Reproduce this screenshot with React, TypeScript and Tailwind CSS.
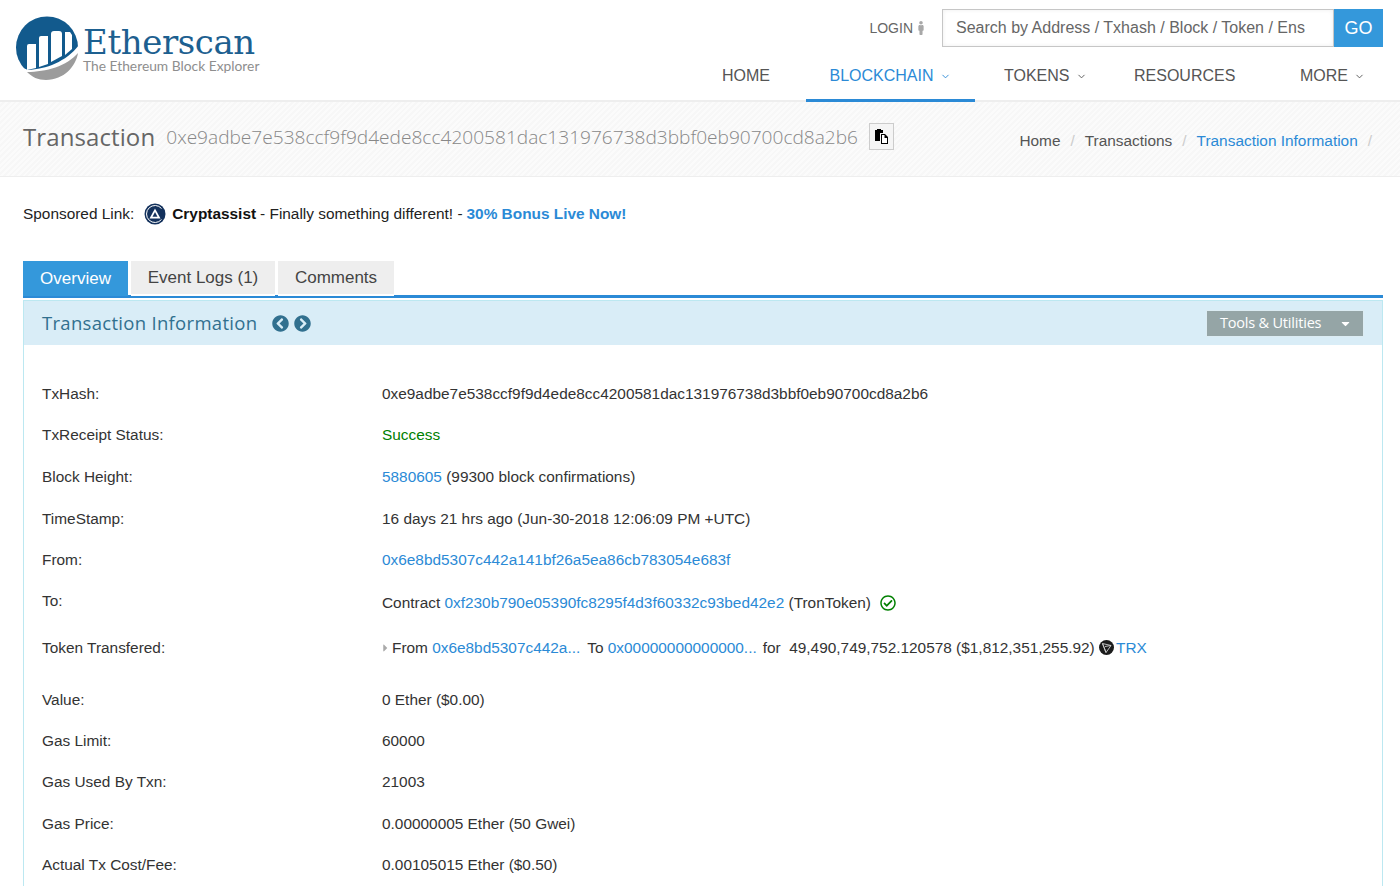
import React from "react";
import { FaChevronCircleLeft, FaChevronCircleRight, FaMale, FaRegCheckCircle, FaCaretDown, FaCaretRight } from "react-icons/fa";
import { ChevronDown } from "lucide-react";

const A = ({ children }: { children: React.ReactNode }) => <a className="text-[#2b8ad6]">{children}</a>;

function Logo() {
  return (
    <div className="flex items-start pl-[16px] pt-[16px]">
      <svg width="63" height="65" viewBox="0 0 63 65" className="shrink-0">
        <circle cx="31" cy="31.5" r="31" fill="#125a8d" />
        <path d="M0 49 L12 54 C30 53 50 46 63 29 L63 65 L0 65Z" fill="#ffffff" />
        <path d="M11 56 C 30 56 51 50 62 37 C60 50 48 64 30 64 C22 64 16 61 11 56Z" fill="#9c9c9c" />
        <path d="M11 30 a2 2 0 0 1 2 -2 h7 v24 l-9 2Z" fill="#fff" />
        <path d="M23 22 a2 2 0 0 1 2 -2 h7 v28 l-9 3Z" fill="#fff" />
        <path d="M35 18 a3 3 0 0 1 3 -3 h5 a3 3 0 0 1 3 3 v22 l-11 6Z" fill="#fff" />
        <path d="M49 16 h5 l2 3 v14 l-7 6Z" fill="#fff" />
      </svg>
      <div className="ml-[4px] flex flex-col">
        <span className="mt-[9px] h-[34px] w-[172px] font-['DejaVu_Serif',serif] text-[34px] leading-[34px] tracking-[-0.4px] text-[#1d6090]">Etherscan</span>
        <span className="mt-[-1px] font-['Lato',sans-serif] text-[13.8px] leading-[16px] text-[#8e8e8e]">The Ethereum Block Explorer</span>
      </div>
    </div>
  );
}

function NavItem({ label, active, chevron, className }: { label: string; active?: boolean; chevron?: boolean; className: string }) {
  return (
    <div className={`flex h-[50px] items-center ${className} ${active ? "border-b-[3px] border-[#2b8ad6] text-[#2b8ad6]" : "pb-[3px] text-[#555555]"}`}>
      <span className="text-[16px]">{label}</span>
      {chevron && <ChevronDown size={11} strokeWidth={2} className="ml-[6px] mt-[1px]" />}
    </div>
  );
}

function Row({ label, h, children }: { label: string; h: string; children: React.ReactNode }) {
  return (
    <div className={`flex items-center ${h}`}>
      <div className="w-[340px] shrink-0 text-[#333333]">{label}</div>
      <div className="flex items-center whitespace-pre text-[#333333]">{children}</div>
    </div>
  );
}

export default function App() {
  return (
    <div className="h-[888px] w-[1400px] overflow-hidden bg-white font-['Liberation_Sans',sans-serif] text-[15.4px] leading-[22px] text-[#333333]">
      <header className="flex h-[102px] justify-between border-b-2 border-[#eeeeee]">
        <Logo />
        <div className="flex flex-col items-end">
          <div className="mt-[9px] flex h-[38px] items-center pr-[17px]">
            <span className="text-[14px] text-[#666666]">LOGIN</span>
            <FaMale size={14} className="ml-[1px] text-[#a8a8a8]" />
            <div className="ml-[14px] flex h-[38px] w-[392px] items-center border border-[#c6c6c6] pl-[13px] text-[16px] text-[#666666] shadow-[inset_0_0_4px_#eeeeee]">Search by Address / Txhash / Block / Token / Ens</div>
            <div className="flex h-[38px] w-[49px] items-center justify-center bg-[#3498db] text-[18px] text-white">GO</div>
          </div>
          <nav className="mt-[5px] flex w-[678px]">
            <NavItem label="HOME" className="w-[84px]" />
            <NavItem label="BLOCKCHAIN" chevron active className="w-[169px] justify-center pr-[1px]" />
            <NavItem label="TOKENS" chevron className="ml-[29px] w-[130px]" />
            <NavItem label="RESOURCES" className="w-[166px]" />
            <NavItem label="MORE" chevron className="w-[100px]" />
          </nav>
        </div>
      </header>

      <section className="flex h-[75px] items-center justify-between border-b border-[#eeeeee] bg-[#fafafa] bg-[repeating-linear-gradient(135deg,#fbfbfb_0px,#fbfbfb_2px,#f7f7f7_2px,#f7f7f7_4px)] pl-[23px] pr-[28px]">
        <div className="flex items-center pb-[5px]">
          <span className="font-['Open_Sans',sans-serif] text-[24px] leading-[32px] tracking-[0.1px] text-[#666666]">Transaction</span>
          <span className="ml-[11px] font-['Open_Sans',sans-serif] text-[19.1px] font-light text-[#888888]">0xe9adbe7e538ccf9f9d4ede8cc4200581dac131976738d3bbf0eb90700cd8a2b6</span>
          <span className="ml-[11px] flex h-[27px] w-[25px] items-center justify-center border border-[#cccccc] bg-[#f5f5f5]">
            <svg width="15" height="16" viewBox="0 0 15 16">
              <path d="M1 1 H9 V4 H6 V12 H1Z" fill="#000" />
              <path d="M3 0 H7 V2 H3Z" fill="#000" />
              <path d="M7 5 H11 L14 8 V15 H7Z" fill="#000" />
              <path d="M8 6 H10.5 V9 H13 V14 H8Z" fill="#fff" />
            </svg>
          </span>
        </div>
        <div className="flex items-center pt-[3px] text-[#555555]">
          <span>Home</span><span className="mx-[10px] text-[#cccccc]">/</span>
          <span>Transactions</span><span className="mx-[10px] text-[#cccccc]">/</span>
          <span className="text-[#2b8ad6]">Transaction Information</span><span className="ml-[10px] text-[#cccccc]">/</span>
        </div>
      </section>

      <div className="flex h-[84px] items-center pb-[11px] pl-[23px] text-[#222222]">
        <span>Sponsored Link:</span>
        <svg width="22" height="22" viewBox="0 0 22 22" className="ml-[10px]">
          <circle cx="11" cy="11" r="10.5" fill="#13315c" />
          <path d="M17.5 5.5 A8.5 8.5 0 1 0 17.5 16.5" fill="none" stroke="#ffffff" strokeWidth="1" />
          <path d="M11 5.5 L16.5 15.5 H5.5Z" fill="#ffffff" />
          <path d="M11 9 L13.5 13.8 H8.5Z" fill="#13315c" />
        </svg>
        <strong className="ml-[6px] font-bold text-[#111111]">Cryptassist</strong>
        <span className="ml-[4px]">- Finally something different! - </span>
        <strong className="ml-[4px] font-bold text-[#2b8ad6]">30% Bonus Live Now!</strong>
      </div>

      <div className="mx-[23px] w-[1360px]">
        <div className="flex h-[37px] items-start border-b-[3px] border-[#2b8ad6]">
          <div className="flex h-[35px] w-[105px] items-center justify-center bg-[#3498db] text-[17px] text-white">Overview</div>
          <div className="ml-[3px] flex h-[35px] w-[144px] items-center justify-center border-b-2 border-white bg-[#eeeeee] text-[17px] text-[#444444]">Event Logs (1)</div>
          <div className="ml-[3px] flex h-[35px] w-[116px] items-center justify-center border-b-2 border-white bg-[#eeeeee] text-[17px] text-[#444444]">Comments</div>
        </div>
        <div className="mt-[2px] border-x border-[#bce8f1]">
          <div className="flex h-[45px] items-center justify-between border-t border-[#bce8f1] bg-[#d9edf7] pl-[18px] pr-[18px]">
            <div className="flex items-center">
              <span className="font-['Open_Sans',sans-serif] text-[18.5px] tracking-[0.3px] text-[#31708f]">Transaction Information</span>
              <FaChevronCircleLeft size={17} className="ml-[15px] text-[#31708f]" />
              <FaChevronCircleRight size={17} className="ml-[5px] text-[#31708f]" />
            </div>
            <div className="flex h-[27px] w-[158px] items-center border border-[#dcecf3] bg-[#95a5a6] pl-[13px] font-['Open_Sans',sans-serif] text-[14.5px] tracking-[-0.2px] text-white">
              <span>Tools &amp; Utilities</span>
              <FaCaretDown size={13} className="ml-[18px]" />
            </div>
          </div>
          <div className="px-[18px] pt-[28px]">
            <Row label="TxHash:" h="h-[41px]">0xe9adbe7e538ccf9f9d4ede8cc4200581dac131976738d3bbf0eb90700cd8a2b6</Row>
            <Row label="TxReceipt Status:" h="h-[42px]"><span className="text-[#008000]">Success</span></Row>
            <Row label="Block Height:" h="h-[42px]"><A>5880605</A> (99300 block confirmations)</Row>
            <Row label="TimeStamp:" h="h-[41px]">16 days 21 hrs ago (Jun-30-2018 12:06:09 PM +UTC)</Row>
            <Row label="From:" h="h-[42px]"><A>0x6e8bd5307c442a141bf26a5ea86cb783054e683f</A></Row>
            <div className="flex h-[44px] items-center">
              <div className="mb-[5px] w-[340px] shrink-0">To:</div>
              <div className="flex items-center whitespace-pre">Contract <A>0xf230b790e05390fc8295f4d3f60332c93bed42e2</A> (TronToken)<FaRegCheckCircle size={16} className="ml-[9px] mt-[-1px] text-[#008000]" /></div>
            </div>
            <div className="flex h-[46px] items-center">
              <div className="w-[340px] shrink-0">Token Transfered:</div>
              <div className="flex items-center whitespace-pre">
                <FaCaretRight size={12} className="-ml-[2px] mr-[1px] w-[11px] text-[#aaaaaa]" />
                <span>From </span>
                <A>0x6e8bd5307c442a...</A>
                <span className="ml-[7px]">To </span>
                <A>0x00000000000000...</A>
                <span className="ml-[6px]">for  49,490,749,752.120578 ($1,812,351,255.92) </span>
                <svg width="15" height="15" viewBox="0 0 15 15" className="mt-[-2px]">
                  <circle cx="7.5" cy="7.5" r="7.5" fill="#1c1c1c" />
                  <path d="M3.5 3.5 L12 5.5 L7 12.5Z M3.5 3.5 L7 12.5 M12 5.5 L6 6.5" fill="none" stroke="#cfcfcf" strokeWidth="0.9" />
                </svg>
                <span className="ml-[2px] text-[#2b8ad6]">TRX</span>
              </div>
            </div>
            <div className="h-[8px]" />
            <Row label="Value:" h="h-[41px]">0 Ether ($0.00)</Row>
            <Row label="Gas Limit:" h="h-[41px]">60000</Row>
            <Row label="Gas Used By Txn:" h="h-[42px]">21003</Row>
            <Row label="Gas Price:" h="h-[41px]">0.00000005 Ether (50 Gwei)</Row>
            <Row label="Actual Tx Cost/Fee:" h="h-[42px]">0.00105015 Ether ($0.50)</Row>
          </div>
        </div>
      </div>
    </div>
  );
}
